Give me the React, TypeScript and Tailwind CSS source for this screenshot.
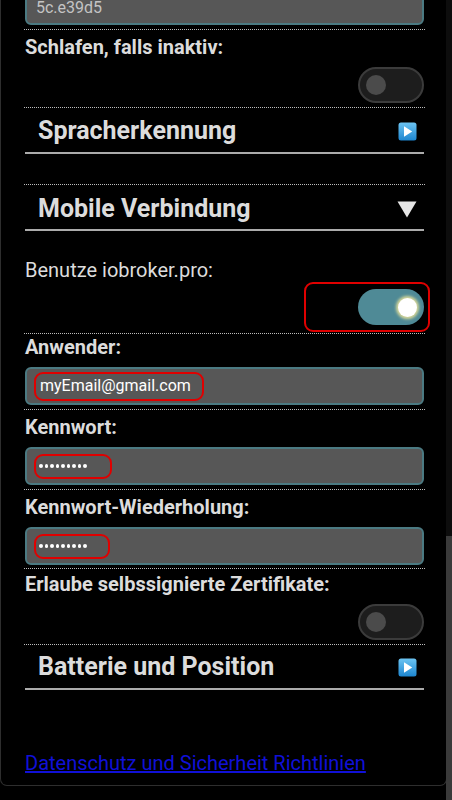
import React, { FC } from "react";

const Divider: FC = () => (
  <div className="mx-[-1px] border-t border-dotted border-[#bdbdbd]" />
);

const SolidLine: FC = () => <div className="h-[2px] bg-[#ababab]" />;

const Label: FC<{ text: string; bold?: boolean }> = ({ text, bold = true }) => (
  <div
    className={`mt-[6px] h-[22px] whitespace-nowrap text-[20px] leading-[22px] text-[#dcdcdc] ${bold ? "font-bold" : "font-normal"}`}
  >
    {text}
  </div>
);

const Toggle: FC<{ on?: boolean }> = ({ on = false }) =>
  on ? (
    <div className="flex h-[36px] w-[66px] items-center justify-end rounded-full bg-[#4f8a96] pr-[7px]">
      <div className="h-[19px] w-[19px] rounded-full bg-white shadow-[0_0_3px_2px_#d8d89a]" />
    </div>
  ) : (
    <div className="flex h-[36px] w-[66px] items-center rounded-full border-2 border-[#3b3b3b] bg-[#1d1d1d] pl-[6px]">
      <div className="h-[20px] w-[20px] rounded-full bg-[#4b4b4b]" />
    </div>
  );

const Field: FC<{ children: React.ReactNode; top?: boolean }> = ({ children, top }) => (
  <div
    className={`flex h-[38px] items-center rounded-[6px] border-2 border-[#4b7a82] bg-[#575757] pl-[9px] ${top ? "-mt-[13px]" : "mt-[9px]"}`}
  >
    {children}
  </div>
);

const Marked: FC<{ children: React.ReactNode; className?: string }> = ({ children, className }) => (
  <span className={`inline-flex items-center rounded-[9px] border-2 border-[#e00000] ${className ?? ""}`}>
    {children}
  </span>
);

const PlayIcon: FC = () => (
  <svg width="19" height="19" viewBox="0 0 19 19">
    <defs>
      <linearGradient id="pl" x1="0" y1="0" x2="0" y2="1">
        <stop offset="0" stopColor="#6cc4f2" />
        <stop offset="1" stopColor="#1d86d0" />
      </linearGradient>
    </defs>
    <rect x="0.5" y="0.5" width="18" height="18" rx="2.5" fill="url(#pl)" />
    <path d="M6 4.2 L14.2 9.5 L6 14.8 Z" fill="#ffffff" />
  </svg>
);

const DownIcon: FC = () => (
  <svg width="20" height="17" viewBox="0 0 20 17">
    <path d="M0.5 0.5 H19.5 L10 16.5 Z" fill="#e6e6e6" />
  </svg>
);

const Section: FC<{ title: string; icon: React.ReactNode }> = ({ title, icon }) => (
  <div className="flex h-[28px] items-center justify-between pl-[13px] pr-[7px]">
    <span className="whitespace-nowrap text-[25px] font-bold leading-[28px] text-[#dcdcdc]">{title}</span>
    {icon}
  </div>
);

const Dots: FC = () => (
  <span className="flex gap-[2px]" aria-label="•••••••••">
    {Array.from({ length: 9 }).map((_, i) => (
      <span key={i} className="h-[3.5px] w-[3.5px] rounded-full bg-white" />
    ))}
  </span>
);

export default function App() {
  return (
    <div
      className="relative h-[800px] w-[452px] overflow-hidden bg-black"
      style={{ fontFamily: "Roboto, 'Noto Sans', sans-serif" }}
    >
      <div className="h-[799px] w-[447px] rounded-b-[7px] border-x border-b border-[#2e2e2e] pl-[24px] pr-[22px]">
        <Field top>
          <span className="mt-[4px] text-[16px] text-[#c4c4c4]">5c.e39d5</span>
        </Field>
        <div className="mt-[4px]" />
        <Divider />
        <Label text="Schlafen, falls inaktiv:" />
        <div className="mt-[9px] flex justify-end">
          <Toggle />
        </div>
        <div className="mt-[4px]" />
        <Divider />

        <div className="mt-[9px]" />
        <Section title="Spracherkennung" icon={<PlayIcon />} />
        <div className="mt-[7px]" />
        <SolidLine />

        <div className="mt-[30px]" />
        <Divider />
        <div className="mt-[10px]" />
        <Section title="Mobile Verbindung" icon={<DownIcon />} />
        <div className="mt-[6px]" />
        <SolidLine />

        <div className="mt-[28px]" />
        <Label text="Benutze iobroker.pro:" bold={false} />
        <div className="mt-[1px] flex justify-end">
          <Marked className="-mr-[6px] h-[50px] w-[126px] justify-end pr-[4px]">
            <Toggle on />
          </Marked>
        </div>
        <div className="mt-[1px]" />
        <Divider />

        <div className="-mt-[4px]" />
        <Label text="Anwender:" />
        <Field>
          <Marked className="-ml-[2px] h-[29px] pl-[4px] pr-[11px]">
            <span className="text-[16px] text-white">myEmail@gmail.com</span>
          </Marked>
        </Field>
        <div className="mt-[4px]" />
        <Divider />

        <Label text="Kennwort:" />
        <Field>
          <Marked className="-ml-[2px] h-[25px] w-[78px] pl-[3px]">
            <Dots />
          </Marked>
        </Field>
        <div className="mt-[4px]" />
        <Divider />

        <Label text="Kennwort-Wiederholung:" />
        <Field>
          <Marked className="-ml-[2px] h-[25px] w-[76px] pl-[3px]">
            <Dots />
          </Marked>
        </Field>
        <div className="mt-[3px]" />
        <Divider />

        <div className="-mt-[2px]" />
        <Label text="Erlaube selbssignierte Zertifikate:" />
        <div className="mt-[9px] flex justify-end">
          <Toggle />
        </div>
        <div className="mt-[4px]" />
        <Divider />

        <div className="mt-[8px]" />
        <Section title="Batterie und Position" icon={<PlayIcon />} />
        <div className="mt-[7px]" />
        <SolidLine />

        <div className="mt-[61px]">
          <a href="#" className="text-[20px] leading-[24px] text-[#1010d8] underline">
            Datenschutz und Sicherheit Richtlinien
          </a>
        </div>
      </div>
      {/* scrollbar */}
      <div className="absolute right-0 top-0 h-full w-[6px] bg-[#0d0d0d]">
        <div className="mt-[536px] h-[264px] w-full bg-[#3a3a3a]" />
      </div>
    </div>
  );
}
